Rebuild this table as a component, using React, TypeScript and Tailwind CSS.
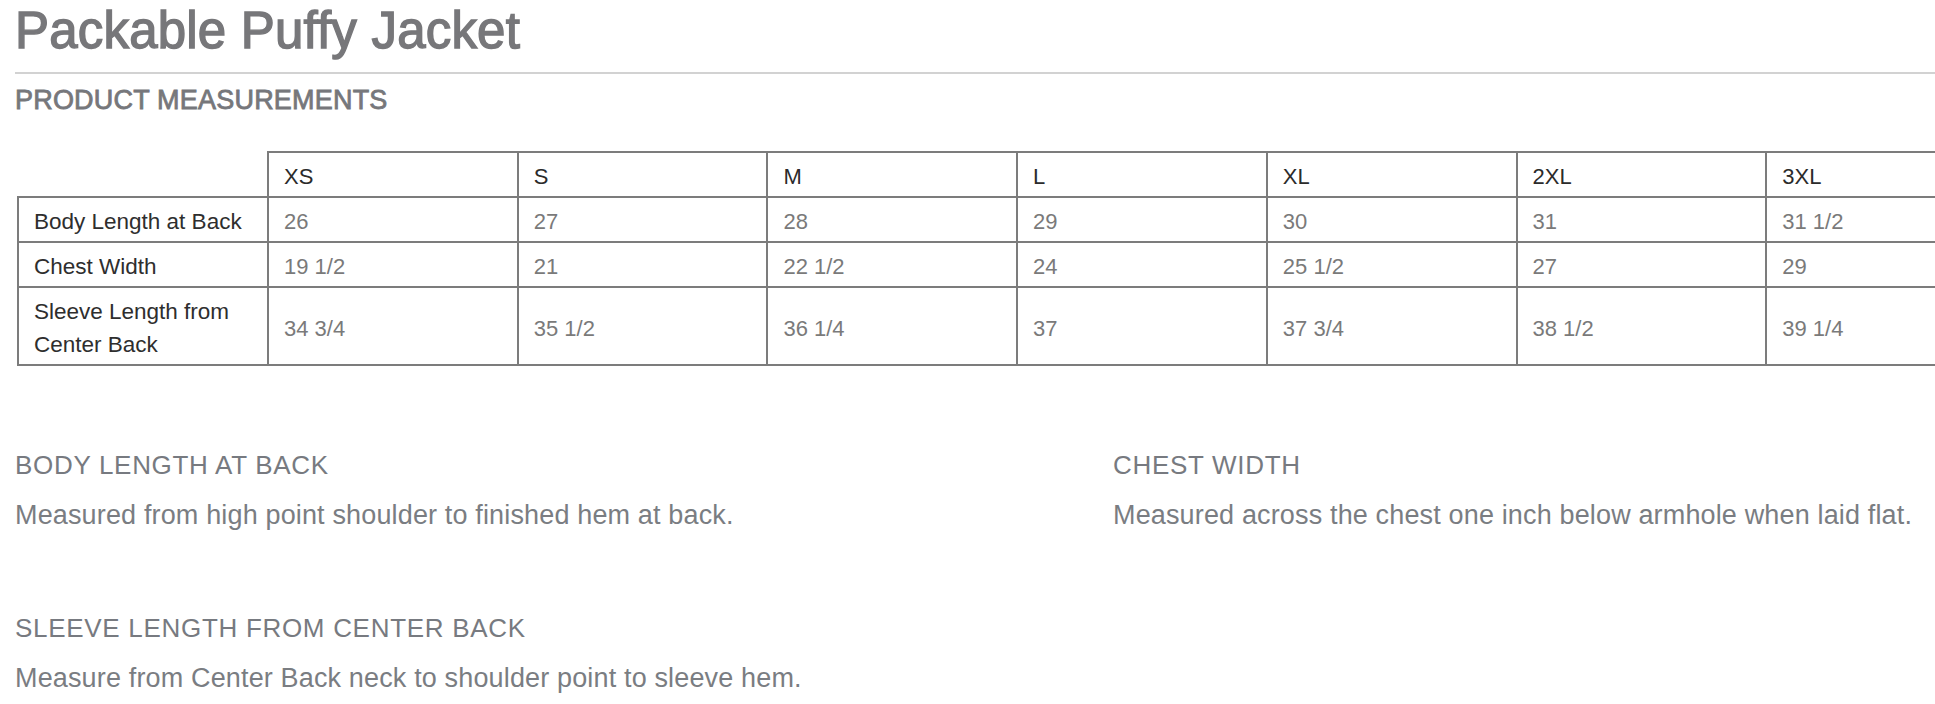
import React from "react";

const sizes = ["XS", "S", "M", "L", "XL", "2XL", "3XL"];

const rows: { label: string[]; values: string[] }[] = [
  { label: ["Body Length at Back"], values: ["26", "27", "28", "29", "30", "31", "31 1/2"] },
  { label: ["Chest Width"], values: ["19 1/2", "21", "22 1/2", "24", "25 1/2", "27", "29"] },
  {
    label: ["Sleeve Length from", "Center Back"],
    values: ["34 3/4", "35 1/2", "36 1/4", "37", "37 3/4", "38 1/2", "39 1/4"],
  },
];

const notes = [
  { title: "BODY LENGTH AT BACK", text: "Measured from high point shoulder to finished hem at back." },
  { title: "CHEST WIDTH", text: "Measured across the chest one inch below armhole when laid flat." },
  { title: "SLEEVE LENGTH FROM CENTER BACK", text: "Measure from Center Back neck to shoulder point to sleeve hem." },
];

const cell = "border-2 border-[#7c7c7c] pl-[15px] pr-2 pt-[7px] pb-[3px] align-middle text-left font-normal";

export default function App() {
  return (
    <div className="w-full h-[704px] overflow-hidden bg-white font-['Liberation_Sans',Arial,sans-serif]">
      <div className="pl-[15px]">
        <h1 className="text-[51px] leading-[62px] tracking-[0.2px] text-[#77777a] [-webkit-text-stroke:1.4px_#77777a]">
          Packable Puffy Jacket
        </h1>
        <div className="mt-[10px] h-[2px] bg-[#d2d2d2]" />
        <h2 className="mt-[10px] text-[27px] leading-[32px] tracking-[0.2px] text-[#76777b] [-webkit-text-stroke:0.8px_#76777b]">
          PRODUCT MEASUREMENTS
        </h2>
      </div>

      <div className="pl-[17px] mt-[35px]">
        <table className="w-[2000px] table-fixed border-collapse text-[22px] leading-[33px]">
          <thead>
            <tr>
              <th className="border-0 w-[250px]" />
              {sizes.map((s) => (
                <th key={s} className={`${cell} text-[#2b2b2b]`}>
                  {s}
                </th>
              ))}
            </tr>
          </thead>
          <tbody>
            {rows.map((r) => (
              <tr key={r.label.join(" ")}>
                <td className={`${cell} text-[22.5px] text-[#2e2e2e]`}>
                  {r.label.map((l) => (
                    <div key={l}>{l}</div>
                  ))}
                </td>
                {r.values.map((v, i) => (
                  <td key={i} className={`${cell} text-[#7a7a7a]`}>
                    {v}
                  </td>
                ))}
              </tr>
            ))}
          </tbody>
        </table>
      </div>

      <div className="pl-[15px] mt-[83px] grid grid-cols-[1098px_1fr] gap-y-[79px]">
        {notes.map((n) => (
          <div key={n.title}>
            <h3 className="text-[26px] leading-[32px] tracking-[0.7px] text-[#777a80]">{n.title}</h3>
            <p className="mt-[16px] text-[27px] leading-[36px] tracking-[0.15px] text-[#7a7d82] whitespace-nowrap">
              {n.text}
            </p>
          </div>
        ))}
      </div>
    </div>
  );
}
